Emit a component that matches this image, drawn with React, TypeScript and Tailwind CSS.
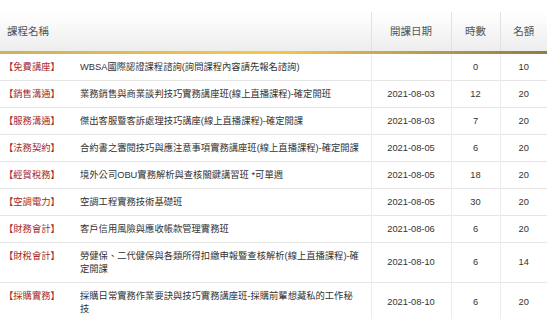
import React from 'react';

interface Course {
    category: string;
    title: string;
    date: string;
    hours: number;
    quota: number;
}

const courses: Course[] = [
    { category: '免費講座', title: 'WBSA國際認證課程諮詢(詢問課程內容請先報名諮詢)', date: '', hours: 0, quota: 10 },
    { category: '銷售溝通', title: '業務銷售與商業談判技巧實務講座班(線上直播課程)-確定開班', date: '2021-08-03', hours: 12, quota: 20 },
    { category: '服務溝通', title: '傑出客服暨客訴處理技巧講座(線上直播課程)-確定開課', date: '2021-08-03', hours: 7, quota: 20 },
    { category: '法務契約', title: '合約書之審閱技巧與應注意事項實務講座班(線上直播課程)-確定開課', date: '2021-08-05', hours: 6, quota: 20 },
    { category: '經貿稅務', title: '境外公司OBU實務解析與查核關鍵講習班 *可單週', date: '2021-08-05', hours: 18, quota: 20 },
    { category: '空調電力', title: '空調工程實務技術基礎班', date: '2021-08-05', hours: 30, quota: 20 },
    { category: '財務會計', title: '客戶信用風險與應收帳款管理實務班', date: '2021-08-06', hours: 6, quota: 20 },
    { category: '財稅會計', title: '勞健保、二代健保與各類所得扣繳申報暨查核解析(線上直播課程)-確定開課', date: '2021-08-10', hours: 6, quota: 14 },
    { category: '採購實務', title: '採購日常實務作業要訣與技巧實務講座班-採購前輩想藏私的工作秘技', date: '2021-08-10', hours: 6, quota: 20 },
];

const App = () => {
    return (
        <div className="w-[553px] h-[319px] overflow-hidden bg-white pt-[12px] font-['Liberation_Sans','Noto_Sans_CJK_TC',sans-serif]">
            <table className="w-[547px] table-fixed border-collapse text-[9.3px] leading-[13px] text-[#333]">
                <colgroup>
                    <col className="w-[371px]" />
                    <col className="w-[80px]" />
                    <col className="w-[49px]" />
                    <col className="w-[47px]" />
                </colgroup>
                <thead>
                    <tr className="h-[39px] bg-gradient-to-b from-white to-[#ededed] text-[10.5px] text-[#555]">
                        <th className="px-[7px] text-left font-normal">課程名稱</th>
                        <th className="border-l border-[#e2e2e2] text-center font-normal">開課日期</th>
                        <th className="border-l border-[#e2e2e2] text-center font-normal">時數</th>
                        <th className="border-l border-[#e2e2e2] text-center font-normal">名額</th>
                    </tr>
                    <tr>
                        <th colSpan={4} className="p-0">
                            <div className="h-[3px] bg-gradient-to-r from-[#cdb25a] via-[#f6c844] to-[#8d7b4a]" />
                        </th>
                    </tr>
                </thead>
                <tbody>
                    {courses.map((course, index) => (
                        <tr key={index} className="border-b border-[#e6e6e6]">
                            <td className="py-[6.5px] pl-[4px] pr-[10px] align-top">
                                <div className="flex items-start">
                                    <span className="w-[76px] shrink-0 text-[#a52a2a]">【{course.category}】</span>
                                    <span>{course.title}</span>
                                </div>
                            </td>
                            <td className="border-l border-[#ececec] text-center align-middle">{course.date}</td>
                            <td className="border-l border-[#ececec] text-center align-middle">{course.hours}</td>
                            <td className="border-l border-[#ececec] text-center align-middle">{course.quota}</td>
                        </tr>
                    ))}
                </tbody>
            </table>
        </div>
    );
};

export default App;
